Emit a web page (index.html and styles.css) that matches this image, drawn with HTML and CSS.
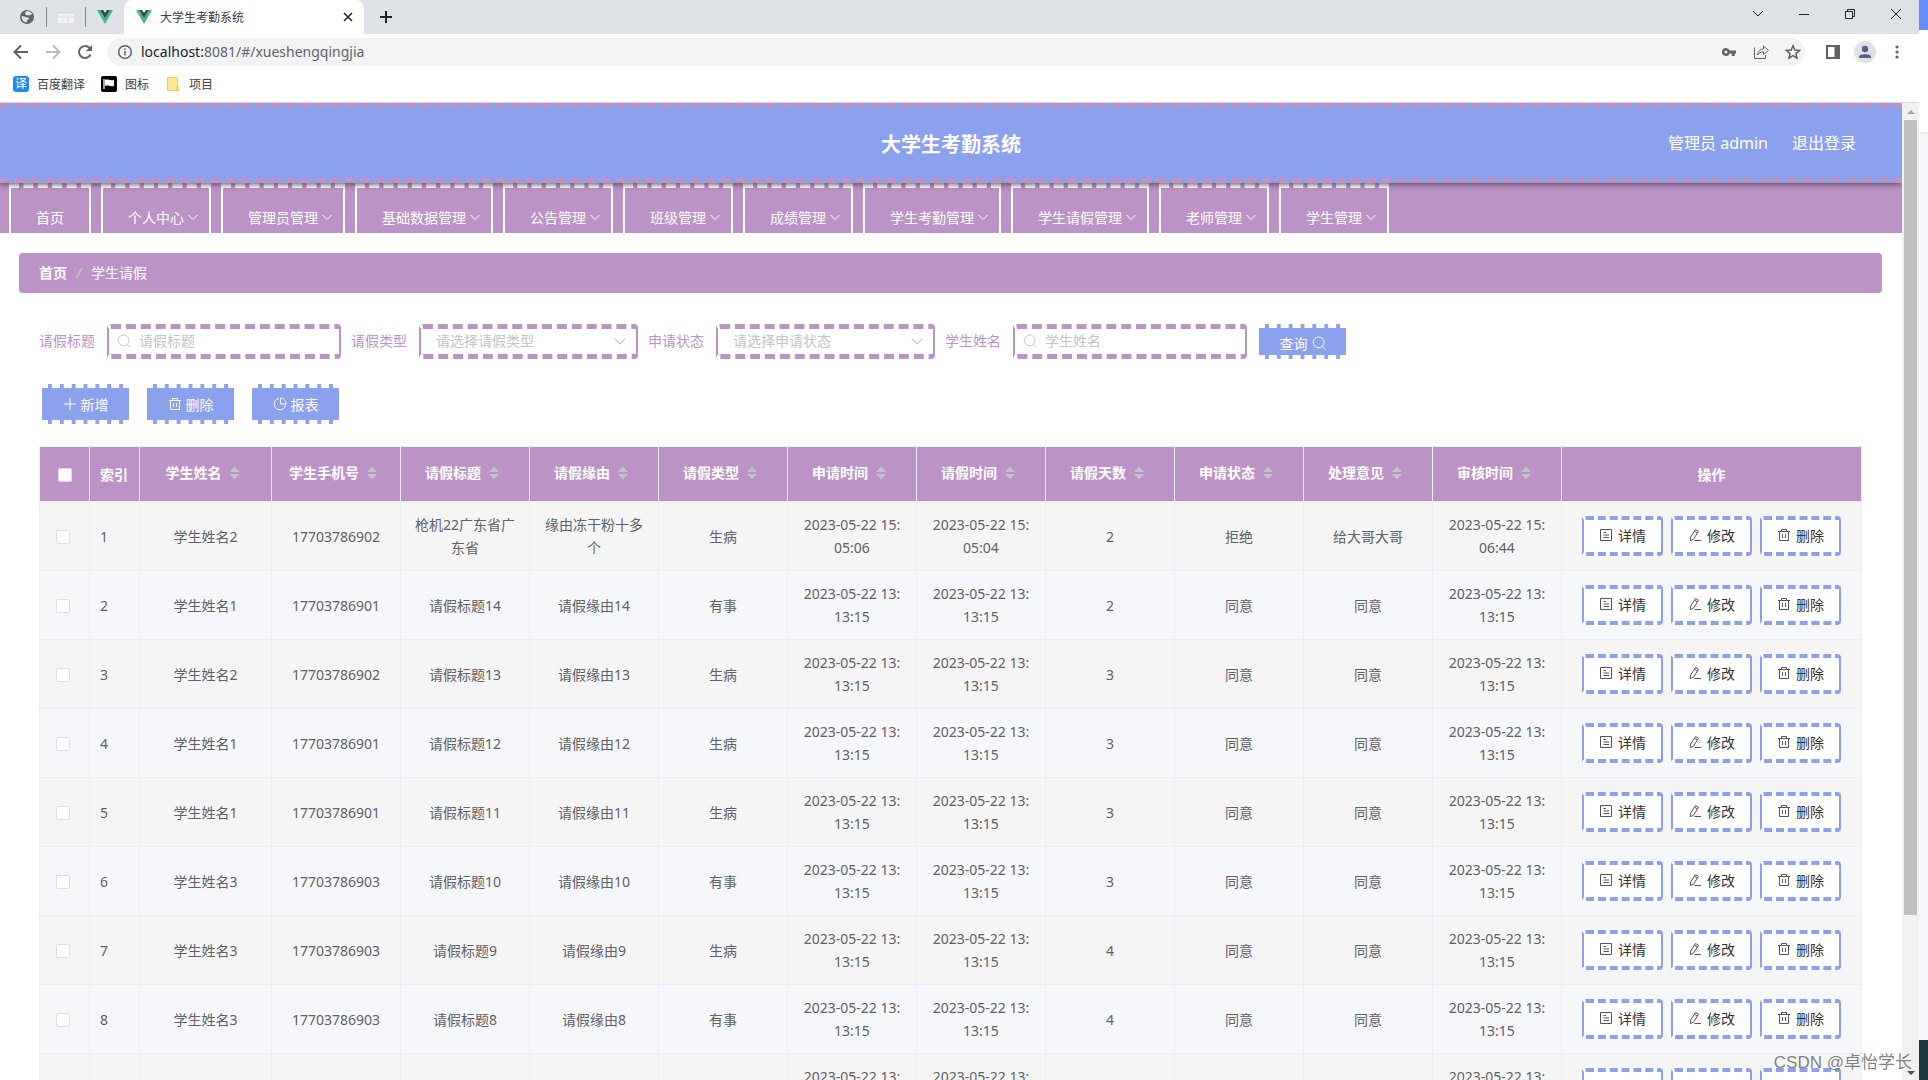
FILE: index.html
```html
<!DOCTYPE html>
<html lang="zh-CN">
<head>
    <meta charset="UTF-8">
    <meta name="viewport" content="width=device-width, initial-scale=1.0">
    <title>大学生考勤系统</title>
    <link rel="stylesheet" href="styles.css">
</head>
<body>
    <!-- shared icons -->
    <svg class="sprite" aria-hidden="true">
        <symbol id="i-vue" viewBox="0 0 16 16"><path fill="#41b883" d="M0 1h3.2L8 9.3 12.8 1H16L8 15z"/><path fill="#35495e" d="M3.2 1h3L8 4.1 9.8 1h3L8 9.3z"/></symbol>
        <symbol id="i-down" viewBox="0 0 12 12"><path d="M1.500 4 6 8.500 10.500 4"/></symbol>
        <symbol id="i-search" viewBox="0 0 14 14"><circle cx="6.6" cy="6.4" r="5.4"/><path d="m10.4 10.4 2.4 2.8"/></symbol>
        <symbol id="i-plus" viewBox="0 0 14 14"><path d="M7 1v12M1 7h12"/></symbol>
        <symbol id="i-trash" viewBox="0 0 14 14"><path d="M1 3.500h12M4.500 3.500v-2h5v2M2.500 3.500v9h9v-9M5.500 6v4M8.500 6v4"/></symbol>
        <symbol id="i-pie" viewBox="0 0 14 14"><path d="M6 1.500A5.700 5.700 0 1 0 12.500 8"/><path d="M7.500 1v6H13C13 3.500 10.500 1 7.500 1z"/></symbol>
        <symbol id="i-doc" viewBox="0 0 14 14"><path d="M1.500 1.500h11v11h-11zM4.500 4.500h2.500M4.500 7h5.500M4.500 9.500h5.500"/></symbol>
        <symbol id="i-edit" viewBox="0 0 14 14"><path d="m7.500 1.500 3 1.700-5 8-3.200 1.500.2-3.500zM6.500 3.200l3 1.700M6.500 12.500H13"/></symbol>
    </svg>

    <div class="screen">
        <div class="window">
            <div class="tab-bar">
                <svg class="pinned" viewBox="0 0 16 16"><circle cx="8" cy="8" r="7" fill="#5f6368"/><path d="M7 2.500c2-1 5 0 6 2.500l-2 1.500c-2-1-3 .5-4-.5s-1.500-2 0-3.500zM2.500 7c2 0 4 .5 6 1.500 2 0 1.500 2 0 2.500L7.500 13.500C4.500 13 2.500 10.500 2.500 7z" fill="#dee1e6"/></svg>
                <span class="divider"></span>
                <svg class="pinned" viewBox="0 0 16 16"><path d="M0 2.500h16v11.500H0z" fill="#f4f4f4"/><path d="M0 2.500h16v2H0z" fill="#c9e3c8"/><path d="M0 8h16M5 4v10M10 4v10" stroke="#e2e2e2"/></svg>
                <span class="divider"></span>
                <svg class="pinned"><use href="#i-vue"/></svg>
                <div class="tab">
                    <svg class="icon-16"><use href="#i-vue"/></svg>
                    <span class="tab-title">大学生考勤系统</span>
                    <button class="plain" aria-label="关闭标签页"><svg class="line" width="10" height="10" viewBox="0 0 10 10" stroke-width="1.500"><path d="m1 1 8 8M9 1 1 9"/></svg></button>
                </div>
                <button class="plain new-tab" aria-label="新标签页"><svg class="line" width="14" height="14" viewBox="0 0 14 14" stroke-width="2"><path d="M7 1v12M1 7h12"/></svg></button>
                <div class="window-buttons">
                    <button class="plain" aria-label="搜索标签页"><svg class="line" width="12" height="12" viewBox="0 0 12 12"><path d="m1 3 5 5 5-5"/></svg></button>
                    <button class="plain" aria-label="最小化"><svg class="line" width="12" height="12" viewBox="0 0 12 12"><path d="M1 6.500h10"/></svg></button>
                    <button class="plain" aria-label="还原"><svg class="line" width="12" height="12" viewBox="0 0 12 12"><path d="M1.500 3.500h7v7h-7zM3.500 3.500v-2h7v7h-2"/></svg></button>
                    <button class="plain" aria-label="关闭"><svg class="line" width="12" height="12" viewBox="0 0 12 12"><path d="m1 1 10 10M11 1 1 11"/></svg></button>
                </div>
            </div>

            <div class="toolbar">
                <button class="plain" aria-label="后退"><svg class="line grey" width="16" height="16" viewBox="0 0 16 16" stroke-width="2"><path d="M15 8H2M8 1.500 1.500 8 8 14.500"/></svg></button>
                <button class="plain" aria-label="前进"><svg class="line pale" width="16" height="16" viewBox="0 0 16 16" stroke-width="2"><path d="M1 8h13M8 1.500 14.500 8 8 14.500"/></svg></button>
                <button class="plain" aria-label="刷新"><svg class="line grey" width="16" height="16" viewBox="0 0 16 16" stroke-width="2"><path d="M13.500 10.500A6 6 0 1 1 12.500 4"/><path d="M15 1v6H9z" fill="#5f6368" stroke="none"/></svg></button>
                <div class="address">
                    <svg class="line grey" width="16" height="16" viewBox="0 0 16 16" stroke-width="1.500"><circle cx="8" cy="8" r="6.300"/><path d="M8 7v4.500M8 4.300v1.500"/></svg>
                    <span class="url"><b>localhost:</b>8081/#/xueshengqingjia</span>
                    <svg width="16" height="16" viewBox="0 0 16 16"><path fill="#5f6368" fill-rule="evenodd" d="M5 4a4 4 0 0 1 3.700 2.500H15v3h-1.300V12h-3V9.500h-2A4 4 0 1 1 5 4zm0 2.500a1.500 1.500 0 1 0 0 3 1.500 1.500 0 0 0 0-3z"/></svg>
                    <svg class="line grey" width="16" height="16" viewBox="0 0 16 16"><path d="M1.500 3.500v11h11V11M4.500 11c.5-4 2.500-6 6-6V2l5 4.500-5 4V8c-3 0-4.500.8-6 3z"/></svg>
                    <svg class="line grey" width="16" height="16" viewBox="0 0 16 16" stroke-width="1.500"><path d="m8 1.800 1.800 4.300 4.700.4-3.600 3.100 1.100 4.600L8 11.700l-4 2.500 1.100-4.600L1.500 6.500l4.700-.4z"/></svg>
                </div>
                <svg width="14" height="14" viewBox="0 0 14 14"><path fill="#5f6368" fill-rule="evenodd" d="M0 0h14v14H0zM2 2v10h6.500V2z"/></svg>
                <svg width="22" height="22" viewBox="0 0 22 22"><circle cx="11" cy="11" r="11" fill="#dee1e6"/><circle cx="11" cy="8" r="3.200" fill="#56617a"/><path d="M5 17v-1.500c0-3 12-3 12 0V17z" fill="#56617a"/></svg>
                <svg width="4" height="14" viewBox="0 0 4 14" fill="#5f6368"><circle cx="2" cy="2" r="1.600"/><circle cx="2" cy="7" r="1.600"/><circle cx="2" cy="12" r="1.600"/></svg>
            </div>

            <div class="bookmarks">
                <a href="#"><span class="fanyi">译</span>百度翻译</a>
                <a href="#"><svg class="icon-16" viewBox="0 0 16 16"><rect width="16" height="16" rx="2"/><path d="M3 3v10" stroke="#fff" stroke-width="1.300"/><path d="M4 4c3-1.500 4 1 9 0v6c-4 1-6-1.500-9 0z" fill="#fff"/></svg>图标</a>
                <a href="#"><svg class="icon-16" viewBox="0 0 16 16"><path d="M2.500 1.500h10v13h-10z" fill="#ffe694" stroke="#eecb54"/><path d="M11.500 11h2v3.500h-2z" fill="#ffe694" stroke="#eecb54"/></svg>项目</a>
            </div>

            <div class="viewport">
                <div class="page">
                    <header class="header">
                        <h1>大学生考勤系统</h1>
                        <div class="user">
                            <span>管理员 admin</span>
                            <a href="#">退出登录</a>
                        </div>
                    </header>

                    <nav class="menu">
                        <a class="home" href="#">首页</a>
                        <a href="#">个人中心<svg><use href="#i-down"/></svg></a>
                        <a href="#">管理员管理<svg><use href="#i-down"/></svg></a>
                        <a href="#">基础数据管理<svg><use href="#i-down"/></svg></a>
                        <a href="#">公告管理<svg><use href="#i-down"/></svg></a>
                        <a href="#">班级管理<svg><use href="#i-down"/></svg></a>
                        <a href="#">成绩管理<svg><use href="#i-down"/></svg></a>
                        <a href="#">学生考勤管理<svg><use href="#i-down"/></svg></a>
                        <a href="#">学生请假管理<svg><use href="#i-down"/></svg></a>
                        <a href="#">老师管理<svg><use href="#i-down"/></svg></a>
                        <a href="#">学生管理<svg><use href="#i-down"/></svg></a>
                    </nav>

                    <main>
                        <div class="breadcrumb">
                            <a href="#">首页</a><i>/</i><span>学生请假</span>
                        </div>

                        <div class="content">
                            <form class="search-form">
                                <label for="title">请假标题</label>
                                <div class="field text-field">
                                    <svg><use href="#i-search"/></svg>
                                    <input id="title" type="text" placeholder="请假标题">
                                </div>
                                <label for="type">请假类型</label>
                                <div class="field select-field">
                                    <select id="type"><option>请选择请假类型</option><option>生病</option><option>有事</option></select>
                                    <svg><use href="#i-down"/></svg>
                                </div>
                                <label for="state">申请状态</label>
                                <div class="field select-field">
                                    <select id="state"><option>请选择申请状态</option><option>同意</option><option>拒绝</option></select>
                                    <svg><use href="#i-down"/></svg>
                                </div>
                                <label for="student">学生姓名</label>
                                <div class="field text-field">
                                    <svg><use href="#i-search"/></svg>
                                    <input id="student" type="text" placeholder="学生姓名">
                                </div>
                                <button class="btn query" type="button">查询<svg><use href="#i-search"/></svg></button>
                            </form>

                            <div class="actions">
                                <button class="btn"><svg><use href="#i-plus"/></svg>新增</button>
                                <button class="btn"><svg><use href="#i-trash"/></svg>删除</button>
                                <button class="btn"><svg><use href="#i-pie"/></svg>报表</button>
                            </div>

                            <table class="table">
                                <colgroup>
                                    <col class="col-small"><col class="col-small"><col class="col-name">
                                    <col span="10"><col class="col-ops">
                                </colgroup>
                                <thead>
                                    <tr>
                                        <th><input type="checkbox" aria-label="全选"></th>
                                        <th class="left">索引</th>
                                        <th class="sort">学生姓名</th>
                                        <th class="sort">学生手机号</th>
                                        <th class="sort">请假标题</th>
                                        <th class="sort">请假缘由</th>
                                        <th class="sort">请假类型</th>
                                        <th class="sort">申请时间</th>
                                        <th class="sort">请假时间</th>
                                        <th class="sort">请假天数</th>
                                        <th class="sort">申请状态</th>
                                        <th class="sort">处理意见</th>
                                        <th class="sort">审核时间</th>
                                        <th>操作</th>
                                    </tr>
                                </thead>
                                <tbody id="rows"></tbody>
                            </table>
                        </div>
                    </main>
                </div>

                <div class="scrollbar">
                    <span class="arrow-up"></span>
                    <span class="thumb"></span>
                    <span class="arrow-down"></span>
                </div>
            </div>
        </div>

        <div class="behind">
            <span class="behind-blue"></span>
            <span class="behind-white"></span>
            <span class="behind-grey"></span>
            <span class="behind-dark"></span>
        </div>
        <div class="watermark">CSDN @卓怡学长</div>
    </div>

    <script src="script.js"></script>
</body>
</html>
```
FILE: styles.css
```css
* {
    margin: 0;
    padding: 0;
    box-sizing: border-box;
}

body {
    font-family: "Noto Sans", "Noto Sans CJK SC", sans-serif;
    font-size: 14px;
    color: #606266;
    background-color: #fff;
    overflow: hidden;
}

a {
    color: inherit;
    text-decoration: none;
}

button, input, select {
    font: inherit;
    color: inherit;
}

button {
    cursor: pointer;
}

svg {
    flex: none;
    display: block;
}

.sprite {
    display: none;
}

.icon-16 {
    width: 16px;
    height: 16px;
}

.plain {
    display: flex;
    border: none;
    background: none;
}

.line {
    fill: none;
    stroke: #202124;
}

.line.grey {
    stroke: #5f6368;
}

.line.pale {
    stroke: #bbbcbe;
}

.screen {
    position: relative;
    display: flex;
    height: 100vh;
}

.window {
    flex: 1;
    min-width: 0;
    display: flex;
    flex-direction: column;
}

/* browser chrome */
.tab-bar {
    display: flex;
    align-items: center;
    height: 34px;
    padding-left: 19px;
    background-color: #dee1e6;
}

.pinned {
    width: 16px;
    height: 16px;
}

.divider {
    width: 1px;
    height: 20px;
    margin: 0 11px;
    background-color: #80868b;
}

.tab {
    display: flex;
    align-items: center;
    gap: 8px;
    width: 240px;
    height: 34px;
    margin-left: 11px;
    padding: 0 11px 0 12px;
    border-radius: 8px 8px 0 0;
    background-color: #fff;
    font-size: 12px;
    color: #3c4043;
}

.tab-title {
    flex: 1;
}

.new-tab {
    margin-left: 15px;
}

.window-buttons {
    display: flex;
    gap: 34px;
    margin: 0 17px 6px auto;
}

.toolbar {
    display: flex;
    align-items: center;
    gap: 16px;
    height: 36px;
    padding: 0 20px 0 13px;
}

.toolbar > svg {
    margin-left: 5px;
}

.toolbar > svg + svg {
    margin-left: -2px;
}

.toolbar > svg:last-child {
    margin-left: 3px;
}

.address {
    flex: 1;
    display: flex;
    align-items: center;
    gap: 16px;
    height: 28px;
    margin-left: -2px;
    padding: 0 4px 0 10px;
    border-radius: 14px;
    background-color: #f1f3f4;
}

.url {
    flex: 1;
    margin-left: -8px;
    padding-bottom: 2px;
    color: #5f6368;
}

.url b {
    font-weight: normal;
    color: #202124;
}

.bookmarks {
    display: flex;
    align-items: center;
    gap: 16px;
    height: 33px;
    padding: 0 13px 4px;
    border-bottom: 1px solid #dadce0;
    font-size: 12px;
    color: #3c4043;
}

.bookmarks a {
    display: flex;
    align-items: center;
    gap: 8px;
}

.fanyi {
    width: 16px;
    height: 16px;
    border-radius: 3px;
    background-color: #1e88f5;
    color: #fff;
    line-height: 16px;
    text-align: center;
}

.viewport {
    flex: 1;
    min-height: 0;
    display: flex;
}

.page {
    flex: 1;
    min-width: 0;
    overflow: hidden;
}

/* site header */
.header {
    position: relative;
    display: grid;
    grid-template-columns: 1fr auto 1fr;
    align-items: center;
    height: 80px;
    padding: 0 46px;
    border: dashed #bc93c6;
    border-width: 5px 0;
    background-color: #8ca1ee;
    box-shadow: 0 1px 6px #444;
    color: #fff;
}

.header h1 {
    grid-column: 2;
    font-size: 20px;
}

.user {
    display: flex;
    justify-content: flex-end;
    gap: 24px;
    padding-bottom: 2px;
    font-size: 16px;
}

.menu {
    display: flex;
    gap: 10px;
    height: 50px;
    padding-left: 9px;
    overflow: hidden;
    background-color: #bc93c6;
    color: #fff;
}

.menu a {
    display: flex;
    align-items: center;
    gap: 3px;
    height: 63px;
    padding: 0 10px 0 25px;
    border: 2px solid #fff;
    border-top: 5px dashed #fff;
    border-bottom: none;
    white-space: nowrap;
}

.menu .home {
    padding-right: 25px;
}

.menu svg {
    width: 12px;
    height: 12px;
    fill: none;
    stroke: #fff;
}

main {
    padding: 20px;
    padding-left: 19px;
}

.breadcrumb {
    display: flex;
    align-items: center;
    gap: 9px;
    height: 40px;
    padding: 0 20px 2px;
    border-radius: 4px;
    background-color: #bc93c6;
    color: #fff;
}

.breadcrumb a {
    font-weight: bold;
}

.breadcrumb i {
    color: #c0c4cc;
    font-weight: bold;
}

.content {
    padding: 30px 20px 0;
}

.search-form {
    display: flex;
    align-items: center;
    gap: 10px;
    height: 36px;
    color: #bc93c6;
    white-space: nowrap;
}

.search-form label {
    padding-bottom: 2px;
}

.field {
    position: relative;
    display: flex;
    align-items: center;
    height: 35px;
    margin-left: 2px;
    border: 2px solid #bc93c6;
    border-top: 5px dashed #bc93c6;
    border-bottom: 5px dashed #bc93c6;
    border-radius: 4px;
    color: #c0c4cc;
}

.field input, .field select {
    width: 100%;
    height: 25px;
    padding-bottom: 2px;
    border: none;
    outline: none;
    background: none;
    appearance: none;
}

.field input::placeholder {
    color: #c0c4cc;
}

.field svg {
    width: 14px;
    height: 14px;
    fill: none;
    stroke: #c0c4cc;
}

.text-field {
    width: 234px;
    gap: 8px;
    padding-left: 8px;
}

.select-field {
    width: 219px;
}

.select-field select {
    padding-left: 15px;
}

/* arrow lies over the select */
.select-field svg {
    position: absolute;
    right: 9px;
    pointer-events: none;
}

.btn {
    display: flex;
    align-items: center;
    justify-content: center;
    gap: 4px;
    width: 91px;
    height: 40px;
    border: 2px solid #fff;
    border-top: 4px dashed #fff;
    border-bottom: 4px dashed #fff;
    background-color: #8ca1ee;
    color: #fff;
}

.btn svg {
    width: 14px;
    height: 14px;
    fill: none;
    stroke: #fff;
}

.query {
    height: 35px;
    padding-top: 4px;
}

.actions {
    display: flex;
    gap: 14px;
    margin: 25px 0 22px 1px;
}

.table {
    width: 100%;
    table-layout: fixed;
    border-collapse: separate;
    border-spacing: 0;
    border: 1px solid #ebeef5;
    border-width: 1px 0 0 1px;
}

.col-small {
    width: 50px;
}

.col-name {
    width: 132px;
}

.col-ops {
    width: 300px;
}

.table th, .table td {
    padding: 0 10px;
    border: 1px solid #ebeef5;
    border-width: 0 1px 1px 0;
    line-height: 23px;
    text-align: center;
    word-break: break-all;
}

/* narrow enough to break a date after the hour */
.table td.time {
    padding: 0 12px;
}

.table th {
    height: 55px;
    background-color: #bc93c6;
    color: #fff;
}

.table th.sort {
    padding: 0 8px 4px 2px;
}

.table .left {
    padding-right: 0;
    text-align: left;
}

.table td {
    height: 69px;
    background-color: #f5f5f5;
}

.table tr:nth-child(even) td {
    background-color: #f5f7fb;
}

.sort::after {
    content: "";
    display: inline-block;
    width: 10px;
    height: 13px;
    margin-left: 8px;
    vertical-align: -2px;
    background-color: #c0c4cc;
    clip-path: polygon(50% 0, 100% 42%, 0 42%, 0 58%, 100% 58%, 50% 100%, 0 58%, 0 42%);
}

.table input {
    display: block;
    width: 14px;
    height: 14px;
    margin: 2px auto 0;
    border: 1px solid #dcdfe6;
    border-radius: 2px;
    background-color: #fff;
    appearance: none;
}

.table td input {
    margin-left: 6px;
}

.row-actions {
    display: flex;
    justify-content: center;
    gap: 8px;
}

.row-actions button {
    display: flex;
    align-items: center;
    justify-content: center;
    gap: 5px;
    width: 81px;
    height: 40px;
    padding-bottom: 2px;
    border: 2px solid #8ca1ee;
    border-top: 4px dashed #8ca1ee;
    border-bottom: 4px dashed #8ca1ee;
    border-radius: 4px;
    background-color: #fff;
    color: #333;
}

.row-actions svg {
    width: 14px;
    height: 14px;
    fill: none;
    stroke: #555;
}

.scrollbar {
    display: flex;
    flex-direction: column;
    align-items: center;
    width: 17px;
    padding: 7px 0 5px;
    background-color: #f1f1f1;
}

.thumb {
    flex: none;
    width: 13px;
    height: calc(100% - 170px);
    margin-top: 6px;
    background-color: #c1c1c1;
}

.arrow-up, .arrow-down {
    border: 4px solid transparent;
    border-top: none;
    border-bottom-color: #a3a3a3;
}

.arrow-down {
    margin-top: auto;
    border-top: 4px solid #505050;
    border-bottom: none;
}

/* sliver of the window behind */
.behind {
    display: flex;
    flex-direction: column;
    width: 9px;
}

.behind-blue {
    height: 30px;
    background-color: #628fff;
}

.behind-white {
    height: 102px;
    background-color: #fff;
}

.behind-grey {
    flex: 1;
    border-top: 2px solid #ececee;
    background-color: #f5f6f9;
}

.behind-dark {
    height: 40px;
    background-color: #203840;
}

.watermark {
    position: absolute;
    right: 16px;
    bottom: 5px;
    font-family: "Liberation Sans", "Noto Sans CJK SC", sans-serif;
    font-size: 17px;
    line-height: 24px;
    color: rgba(90, 90, 90, 0.75);
}
```
FILE: script.js
```js
const rows = [
    ['学生姓名2', '17703786902', '枪机22广东省广东省', '缘由冻干粉十多个', '生病', '2023-05-22 15:05:06', '2023-05-22 15:05:04', 2, '拒绝', '给大哥大哥', '2023-05-22 15:06:44'],
    leave(1, 14, '有事', 2),
    leave(2, 13, '生病', 3),
    leave(1, 12, '生病', 3),
    leave(1, 11, '生病', 3),
    leave(3, 10, '有事', 3),
    leave(3, 9, '生病', 4),
    leave(3, 8, '有事', 4),
    leave(1, 7, '有事', 4)
];

function leave(student, n, type, days) {
    const time = '2023-05-22 13:13:15';
    return ['学生姓名' + student, '1770378690' + student, '请假标题' + n, '请假缘由' + n, type, time, time, days, '同意', '同意', time];
}

function cell(value) {
    const isTime = String(value).includes(':');
    return `<td${isTime ? ' class="time"' : ''}>${value}</td>`;
}

function button(icon, text) {
    return `<button><svg><use href="#${icon}"/></svg>${text}</button>`;
}

document.getElementById('rows').innerHTML = rows.map((row, i) => `
    <tr>
        <td><input type="checkbox" aria-label="选择第${i + 1}行"></td>
        <td class="left">${i + 1}</td>
        ${row.map(cell).join('')}
        <td><div class="row-actions">${button('i-doc', '详情')}${button('i-edit', '修改')}${button('i-trash', '删除')}</div></td>
    </tr>`).join('');
```
